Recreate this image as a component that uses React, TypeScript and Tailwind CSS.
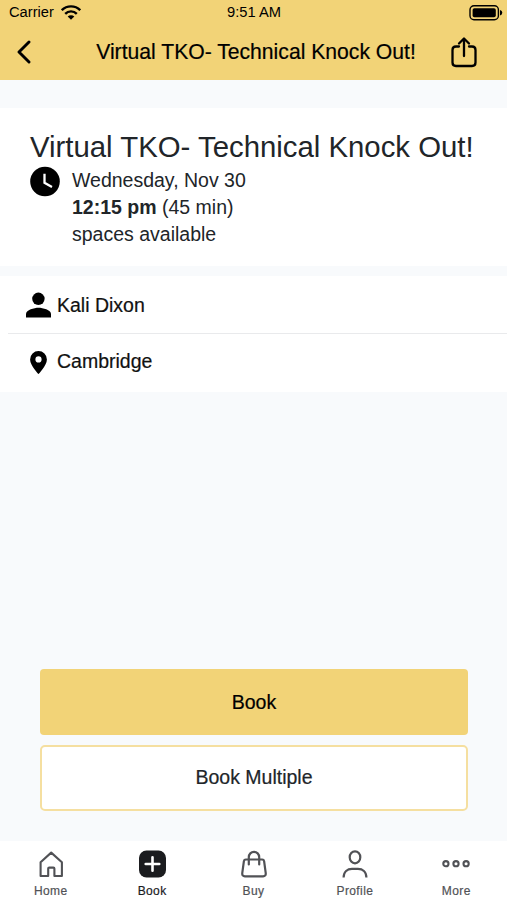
import type { ReactNode } from 'react';

const tabs: { label: string; active?: boolean; icon: ReactNode }[] = [
  {
    label: 'Home',
    icon: (
      <svg width="28" height="28" viewBox="0 0 28 28" fill="none" stroke="currentColor" strokeWidth="2.1" strokeLinejoin="round">
        <path d="M3.6 12.2 14.2 2.6 24.9 12.2V26H17.4V18.6q0-1-1-1h-4.2q-1 0-1 1V26H3.6Z" />
      </svg>
    ),
  },
  {
    label: 'Book',
    active: true,
    icon: (
      <svg className="translate-x-[0.5px]" width="28" height="28" viewBox="0 0 28 28" fill="none">
        <rect x="0.5" y="0.5" width="27" height="27" rx="7.5" fill="currentColor" />
        <path d="M14 7.2v13.6M7.2 14h13.6" stroke="#fff" strokeWidth="2.6" strokeLinecap="round" />
      </svg>
    ),
  },
  {
    label: 'Buy',
    icon: (
      <svg width="28" height="28" viewBox="0 0 28 28" fill="none" stroke="currentColor" strokeWidth="2.2" strokeLinecap="round" strokeLinejoin="round">
        <path d="M5.8 9.500h16.400q1.600 0 1.900 1.600l1.600 11.800q.4 3.400-2.600 3.400H4.900q-3 0-2.600-3.400l1.600-11.800Q4.200 9.500 5.800 9.500Z" />
        <path d="M8.800 14.500V7.200a5.200 5.400 0 0 1 10.400 0v7.300" />
      </svg>
    ),
  },
  {
    label: 'Profile',
    icon: (
      <svg width="28" height="28" viewBox="0 0 28 28" fill="none" stroke="currentColor" strokeWidth="2.2">
        <ellipse cx="14" cy="7.3" rx="5.3" ry="6" />
        <path d="M2.6 27.500c0-5.800 3.900-8.700 8.400-8.700h6c4.500 0 8.400 2.900 8.400 8.700" />
      </svg>
    ),
  },
  {
    label: 'More',
    icon: (
      <svg width="28" height="28" viewBox="0 0 28 28" fill="none" stroke="currentColor" strokeWidth="2.1">
        <circle cx="3.9" cy="13.7" r="2.6" />
        <circle cx="14" cy="13.7" r="2.6" />
        <circle cx="24.1" cy="13.7" r="2.6" />
      </svg>
    ),
  },
];

function StatusBar() {
  return (
    <div className="grid h-[25px] grid-cols-3 items-center pr-[4px] pl-[9px] text-[14.7px] leading-[25px]">
      <div className="flex items-center gap-[7px]">
        <span>Carrier</span>
        <svg width="20" height="15" viewBox="0 0 20 15" fill="none" stroke="currentColor" strokeWidth="2.4">
          <path d="M.8 5.200a13 13 0 0 1 18.400 0" />
          <path d="M4.200 8.800a8.200 8.200 0 0 1 11.600 0" />
          <path d="M10 14.800 6.700 11.500a4.700 4.700 0 0 1 6.600 0Z" fill="currentColor" stroke="none" />
        </svg>
      </div>
      <span className="mr-[4px] text-center">9:51 AM</span>
      <svg className="justify-self-end" width="34" height="17" viewBox="0 0 34 17" fill="none">
        <rect x="1" y="1.700" width="28.400" height="14" rx="4" stroke="currentColor" strokeWidth="1.400" />
        <rect x="3.600" y="4.200" width="23.200" height="9" rx="1.800" fill="currentColor" />
        <path d="M31 5.900q2.300.8 2.300 2.800T31 11.500Z" fill="currentColor" />
      </svg>
    </div>
  );
}

export default function App() {
  return (
    <div className="flex h-[900px] w-[507px] flex-col overflow-hidden bg-[#f8fafc] font-['Liberation_Sans',Arial,sans-serif] text-[#212529]">
      <header className="h-[80px] shrink-0 bg-[#f2d377] text-black">
        <StatusBar />
        <div className="flex h-[54px] items-center justify-between pr-[29px] pl-[16px]">
          <svg width="16" height="24" viewBox="0 0 16 24" fill="none" stroke="currentColor" strokeWidth="2.9" strokeLinecap="round" strokeLinejoin="round">
            <path d="M13 2 3 12l10 10" />
          </svg>
          <h1 className="ml-[30px] text-[21.15px] whitespace-nowrap [-webkit-text-stroke:0.2px_#000]">Virtual TKO- Technical Knock Out!</h1>
          <svg width="28" height="32" viewBox="0 0 28 32" fill="none" stroke="currentColor" strokeWidth="2.3" strokeLinecap="round" strokeLinejoin="round">
            <path d="M9 10.500H6q-3.500 0-3.500 3.500v12.500q0 3.500 3.500 3.500h16q3.500 0 3.500-3.500V14q0-3.500-3.500-3.500h-3" />
            <path d="M14 20V3M9 7.500l5-5 5 5" />
          </svg>
        </div>
      </header>

      {/* Class details */}
      <section className="mt-[28px] h-[158px] shrink-0 bg-white px-[30px] pt-[21px]">
        <h2 className="mb-px text-[29.35px] leading-[35px] whitespace-nowrap">Virtual TKO- Technical Knock Out!</h2>
        <div className="flex gap-[12px] text-[19.5px] leading-[27px]">
          <svg className="mt-[1px]" width="30" height="31" viewBox="0 0 30 31" fill="none">
            <circle cx="15" cy="15.500" r="14.800" fill="#000" />
            <path d="M14.500 7.800v9l7.500 4.200" stroke="#fff" strokeWidth="2.300" />
          </svg>
          <div className="mt-[2px]">
            <p>Wednesday, Nov 30</p>
            <p><strong>12:15 pm</strong> (45 min)</p>
            <p>spaces available</p>
          </div>
        </div>
      </section>

      {/* Instructor and location */}
      <section className="mt-[10px] h-[116px] shrink-0 bg-white text-[19.5px] text-[#111]">
        <div className="ml-[8px] flex h-[58px] items-center gap-[6px] border-b border-[#e9eaec] pl-[18px]">
          <svg width="25" height="26" viewBox="0 0 25 26" fill="#000">
            <circle cx="12.400" cy="6.800" r="6.200" />
            <path d="M0 25.500v-3.600c0-4 8.300-6.100 12.500-6.100S25 17.900 25 21.900v3.600Z" />
          </svg>
          <span className="mt-[2px] [-webkit-text-stroke:0.2px_#111]">Kali Dixon</span>
        </div>
        <div className="flex h-[54px] items-center gap-[10px] pl-[30px]">
          <svg className="mt-[3px]" width="17" height="23" viewBox="0 0 17 23" fill="#000">
            <path fillRule="evenodd" d="M8.500 0A8.400 8.400 0 0 0 .1 8.400C.1 14.500 8.500 23 8.500 23s8.400-8.500 8.400-14.600A8.400 8.400 0 0 0 8.500 0Zm0 5.300a3.100 3.100 0 1 1 0 6.200 3.100 3.100 0 0 1 0-6.200Z" />
          </svg>
          <span className="mt-[2px] [-webkit-text-stroke:0.2px_#111]">Cambridge</span>
        </div>
      </section>

      <div className="mt-auto mb-[30px] flex flex-col gap-[10px] pr-[39px] pl-[40px] text-[19.5px]">
        <button className="h-[66px] rounded-[4px] bg-[#f2d377] pt-[2px] text-black [-webkit-text-stroke:0.2px_#000]">Book</button>
        <button className="h-[66px] rounded-[5px] border-2 border-[#f5dfa0] bg-white [-webkit-text-stroke:0.2px_#212529]">Book Multiple</button>
      </div>

      <nav className="flex h-[59px] shrink-0 bg-white">
        {tabs.map(tab => (
          <div key={tab.label} className={`flex flex-1 flex-col items-center pt-[9px] ${tab.active ? 'text-[#1b1c1f]' : 'text-[#515256]'}`}>
            {tab.icon}
            <span className="mt-[5px] text-[12px] leading-[16px] tracking-[0.4px] [-webkit-text-stroke:0.2px_currentColor]">{tab.label}</span>
          </div>
        ))}
      </nav>
    </div>
  );
}
